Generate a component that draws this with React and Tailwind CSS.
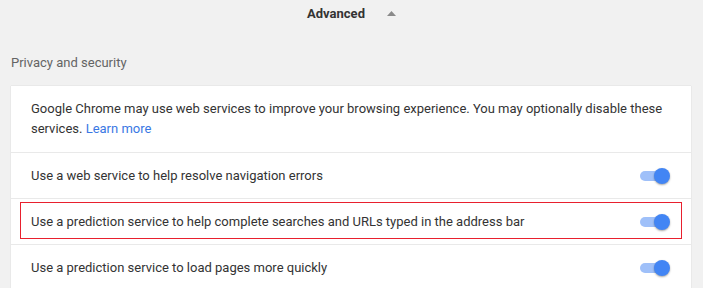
import React from "react";

function Toggle() {
  return (
    <div className="relative w-[30px] h-[16px] flex items-center shrink-0">
      <div className="w-[28px] h-[10px] rounded-full bg-[#9fc0f9]" />
      <div className="absolute right-0 top-0 w-[16px] h-[16px] rounded-full bg-[#4285f4] shadow-[0_1px_2px_rgba(0,0,0,0.35)]" />
    </div>
  );
}

function Row({ children, highlight }) {
  return (
    <div className="relative h-[46px] border-t border-[#e9e9e9] flex items-center justify-between pl-[20px] pr-[21px]">
      <span>{children}</span>
      <Toggle />
      {highlight && (
        <div className="absolute left-[9px] right-[9px] top-[3px] bottom-[5px] border border-[#e8202e] pointer-events-none" />
      )}
    </div>
  );
}

export default function App() {
  return (
    <div
      className="w-full h-[288px] overflow-hidden bg-[#f1f1f1] text-[13px] text-[#333333]"
      style={{ fontFamily: "Roboto, 'Liberation Sans', sans-serif" }}
    >
      <div className="h-[28px] flex items-center justify-center gap-[22px]">
        <span className="font-bold text-[#333333]">Advanced</span>
        <svg width="9" height="5" viewBox="0 0 9 5" className="mt-[-1px]">
          <path d="M0 5 L4.5 0 L9 5 Z" fill="#8a8a8a" />
        </svg>
      </div>
      <div className="h-[58px] flex items-center pl-[11px] text-[#646464] pt-[20px] pb-[8px]">
        Privacy and security
      </div>
      <div className="ml-[11px] mr-[12px] bg-white shadow-[0_0_1px_rgba(0,0,0,0.2)]">
        <div className="px-[20px] pt-[13px] pb-[13px] leading-[20px]">
          Google Chrome may use web services to improve your browsing experience. You may optionally disable these services.{" "}
          <span className="text-[#3a78e4]">Learn more</span>
        </div>
        <Row>Use a web service to help resolve navigation errors</Row>
        <Row highlight>Use a prediction service to help complete searches and URLs typed in the address bar</Row>
        <Row>Use a prediction service to load pages more quickly</Row>
      </div>
    </div>
  );
}
